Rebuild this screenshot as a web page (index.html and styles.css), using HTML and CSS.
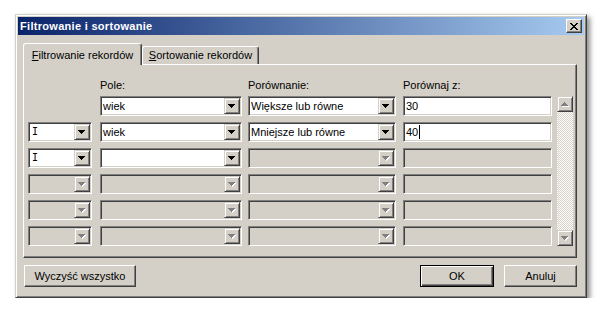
FILE: index.html
```html
<!DOCTYPE html>
<html lang="pl">
<head>
    <meta charset="UTF-8">
    <title>Filtrowanie i sortowanie</title>
    <link rel="stylesheet" href="styles.css">
</head>
<body>
    <div class="window">
        <div class="titlebar">
            <span class="title">Filtrowanie i sortowanie</span>
            <span class="close">
                <svg width="8" height="7" viewBox="0 0 8 7"><path d="M0 0h2v1H0zM6 0h2v1H6zM1 1h2v1H1zM5 1h2v1H5zM2 2h4v1H2zM3 3h2v1H3zM2 4h4v1H2zM1 5h2v1H1zM5 5h2v1H5zM0 6h2v1H0zM6 6h2v1H6z"/></svg>
            </span>
        </div>

        <div class="tabs">
            <div class="tab active"><u>F</u>iltrowanie rekordów</div>
            <div class="tab"><u>S</u>ortowanie rekordów</div>
        </div>

        <div class="panel">
            <div class="grid">
                <div class="scroll">
                    <span class="sbtn up off"></span>
                    <span class="sbtn off"></span>
                </div>

                <div></div>
                <div class="hdr">Pole:</div>
                <div class="hdr">Porównanie:</div>
                <div class="hdr">Porównaj z:</div>
                <div></div>

                <!-- wiersz 1 -->
                <div></div>
                <div class="field w-pole"><span class="txt">wiek</span><span class="drop"></span></div>
                <div class="field w-cmp"><span class="txt">Większe lub równe</span><span class="drop"></span></div>
                <div class="field w-val"><span class="txt">30</span></div>

                <!-- wiersz 2 -->
                <div class="field w-op"><span class="txt op">I</span><span class="drop"></span></div>
                <div class="field w-pole"><span class="txt">wiek</span><span class="drop"></span></div>
                <div class="field w-cmp"><span class="txt">Mniejsze lub równe</span><span class="drop"></span></div>
                <div class="field w-val"><span class="txt">40<span class="caret"></span></span></div>

                <!-- wiersz 3 -->
                <div class="field w-op"><span class="txt op">I</span><span class="drop"></span></div>
                <div class="field w-pole"><span class="txt"></span><span class="drop"></span></div>
                <div class="field w-cmp off"><span class="txt"></span><span class="drop"></span></div>
                <div class="field w-val off"><span class="txt"></span></div>

                <!-- wiersze 4-6 (nieaktywne) -->
                <div class="field w-op off"><span class="txt"></span><span class="drop"></span></div>
                <div class="field w-pole off"><span class="txt"></span><span class="drop"></span></div>
                <div class="field w-cmp off"><span class="txt"></span><span class="drop"></span></div>
                <div class="field w-val off"><span class="txt"></span></div>

                <div class="field w-op off"><span class="txt"></span><span class="drop"></span></div>
                <div class="field w-pole off"><span class="txt"></span><span class="drop"></span></div>
                <div class="field w-cmp off"><span class="txt"></span><span class="drop"></span></div>
                <div class="field w-val off"><span class="txt"></span></div>

                <div class="field w-op off"><span class="txt"></span><span class="drop"></span></div>
                <div class="field w-pole off"><span class="txt"></span><span class="drop"></span></div>
                <div class="field w-cmp off"><span class="txt"></span><span class="drop"></span></div>
                <div class="field w-val off"><span class="txt"></span></div>
            </div>
        </div>

        <div class="footer">
            <button class="btn wide">Wyczyść wszystko</button>
            <button class="btn default">OK</button>
            <button class="btn cancel">Anuluj</button>
        </div>
    </div>
</body>
</html>
```

FILE: styles.css
```css
* {
    box-sizing: border-box;
}

body {
    margin: 0;
    background: #fff;
    font-family: "Liberation Sans", Arial, sans-serif;
    font-size: 11px;
    color: #000;
}

.window {
    width: 572px;
    height: 284px;
    margin: 14px 0 0 15px;
    padding: 2px;
    background: #d4d0c8;
    border: 1px solid;
    border-color: #d4d0c8 #404040 #404040 #d4d0c8;
    box-shadow: inset 1px 1px #fff, inset -1px -1px #808080, 3px 3px 5px rgba(0,0,0,0.45);
    display: flex;
    flex-direction: column;
}

.titlebar {
    height: 18px;
    padding: 0 2px;
    background: linear-gradient(to right, #0a246a, #a6caf0);
    color: #fff;
    font-weight: bold;
    display: flex;
    align-items: center;
    justify-content: space-between;
}

.title {
    letter-spacing: 0.3px;
}

.close {
    width: 16px;
    height: 14px;
    background: #d4d0c8;
    border: 1px solid;
    border-color: #fff #404040 #404040 #fff;
    box-shadow: inset -1px -1px #808080;
    display: flex;
    align-items: center;
    justify-content: center;
}

.tabs {
    display: flex;
    align-items: flex-end;
    height: 21px;
    margin: 8px 0 0 5px;
}

.tab {
    width: 117px;
    height: 18px;
    padding-top: 2px;
    line-height: 13px;
    text-align: center;
    white-space: nowrap;
    border: 1px solid;
    border-bottom: 0;
    border-color: #fff #404040 #fff #fff;
    border-radius: 3px 3px 0 0;
    box-shadow: inset -1px 0 #808080;
}

.tab.active {
    width: 119px;
    height: 22px;
    margin-bottom: -1px;
    padding-top: 5px;
    background: #d4d0c8;
    position: relative;
    z-index: 1;
}

.panel {
    width: 554px;
    height: 194px;
    margin-left: 5px;
    padding: 12px 0 0 4px;
    border: 1px solid;
    border-color: #fff #404040 #404040 #fff;
    box-shadow: inset -1px -1px #808080;
}

.grid {
    display: grid;
    grid-template-columns: 72px 148px 155px 154px 16px;
    grid-template-rows: 13px repeat(6, 20px);
    row-gap: 6px;
}

.hdr {
    line-height: 17px;
    white-space: nowrap;
}

.field {
    height: 20px;
    padding: 1px;
    background: #fff;
    border: 1px solid;
    border-color: #808080 #fff #fff #808080;
    box-shadow: inset 1px 1px #404040, inset -1px -1px #d4d0c8;
    display: flex;
}

.field.off {
    background: #d4d0c8;
}

.field .txt {
    flex: 1;
    padding-left: 1px;
    line-height: 16px;
    white-space: nowrap;
    overflow: hidden;
}

/* Tahoma rysuje I z szeryfami */
.field .txt.op {
    font-family: "DejaVu Sans Mono", monospace;
    font-size: 10px;
    padding-left: 2px;
}

.w-op { width: 64px; }
.w-pole { width: 142px; }
.w-cmp { width: 148px; }
.w-val { width: 149px; }

.caret {
    display: inline-block;
    width: 1px;
    height: 14px;
    margin: 1px 0 0 1px;
    background: #000;
    vertical-align: top;
}

/* przyciski ze strzałką: combo i pasek przewijania */
.drop,
.sbtn {
    width: 16px;
    height: 16px;
    padding: 5px 0 0 3px;
    background: #d4d0c8;
    border: 1px solid;
    border-color: #d4d0c8 #404040 #404040 #d4d0c8;
    box-shadow: inset 1px 1px #fff, inset -1px -1px #808080;
    display: grid;
    align-content: start;
    justify-content: start;
}

.drop::after,
.sbtn::after {
    content: "";
    grid-area: 1 / 1;
    width: 7px;
    height: 4px;
    background: #000;
    clip-path: polygon(0 0, 7px 0, 7px 1px, 6px 1px, 6px 2px, 5px 2px, 5px 3px, 4px 3px, 4px 4px, 3px 4px, 3px 3px, 2px 3px, 2px 2px, 1px 2px, 1px 1px, 0 1px);
}

.off .drop::before,
.sbtn.off::before {
    content: "";
    grid-area: 1 / 1;
    width: 7px;
    height: 4px;
    margin: 1px 0 0 1px;
    background: #fff;
    clip-path: polygon(0 0, 7px 0, 7px 1px, 6px 1px, 6px 2px, 5px 2px, 5px 3px, 4px 3px, 4px 4px, 3px 4px, 3px 3px, 2px 3px, 2px 2px, 1px 2px, 1px 1px, 0 1px);
}

.off .drop::after,
.sbtn.off::after {
    background: #808080;
}

.sbtn.up::before,
.sbtn.up::after {
    clip-path: polygon(3px 0, 4px 0, 4px 1px, 5px 1px, 5px 2px, 6px 2px, 6px 3px, 7px 3px, 7px 4px, 0 4px, 0 3px, 1px 3px, 1px 2px, 2px 2px, 2px 1px, 3px 1px);
}

.scroll {
    grid-column: 5;
    grid-row: 2 / 8;
    display: flex;
    flex-direction: column;
    justify-content: space-between;
    background-color: #fff;
    background-image: conic-gradient(#d4d0c8 25%, #fff 0 50%, #d4d0c8 0 75%, #fff 0);
    background-size: 2px 2px;
}

.footer {
    display: flex;
    gap: 10px;
    margin: 7px 7px 0 6px;
}

.btn {
    width: 74px;
    height: 22px;
    padding: 0;
    font: inherit;
    color: #000;
    background: #d4d0c8;
    border: 1px solid;
    border-color: #fff #404040 #404040 #fff;
    box-shadow: inset -1px -1px #808080;
}

.btn.wide {
    width: 112px;
    margin-right: auto;
}

.btn.default {
    border-color: #000;
    box-shadow: inset 1px 1px #fff, inset -1px -1px #404040, inset -2px -2px #808080;
}

.btn.cancel {
    width: 73px;
}
```
